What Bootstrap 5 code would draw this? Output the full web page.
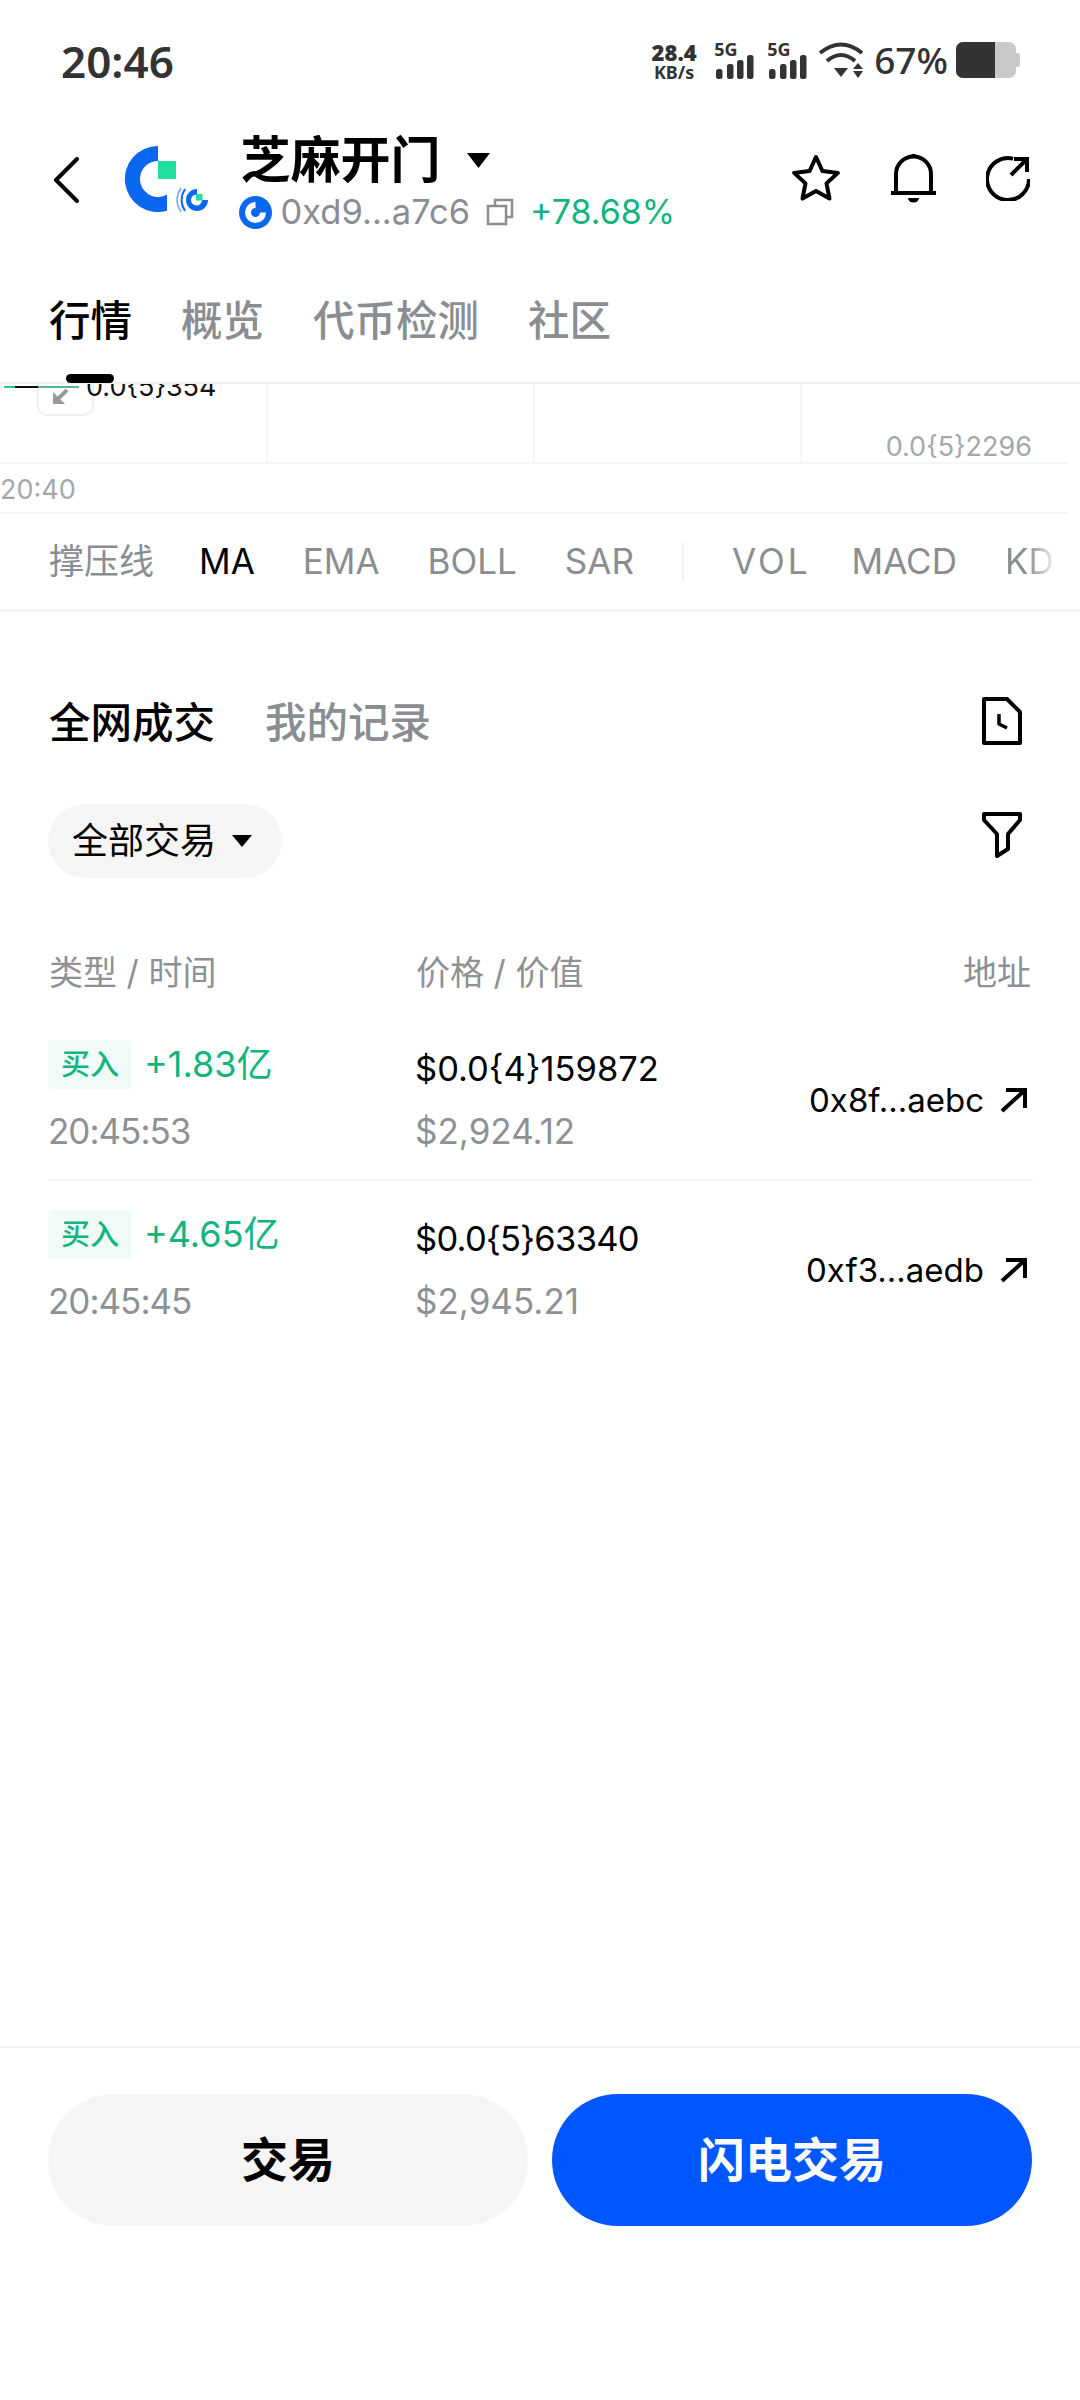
<!DOCTYPE html>
<html lang="zh-CN">
<head>
    <meta charset="UTF-8">
    <meta name="viewport" content="width=device-width, initial-scale=1.0">
    <link href="https://cdn.jsdelivr.net/npm/bootstrap@5.3.3/dist/css/bootstrap.min.css" rel="stylesheet" crossorigin="anonymous">
    <title>芝麻开门</title>
    <style>
        body { width: 1080px; height: 2400px; overflow: hidden; background: #fff; color: #000;
            font-family: Inter, "Noto Sans CJK SC", sans-serif; }
        svg { display: block; flex: none; }

        /* status bar */
        .status-bar { height: 120px; padding: 41px 60px 0 61px; color: #333; font-family: "Noto Sans", "Noto Sans CJK SC", sans-serif; }
        .clock { font-size: 44px; font-weight: 600; line-height: 40px; }
        .speed { width: 50px; margin-right: 15px; text-align: center; font-weight: 700; }
        .speed b { display: block; font-size: 22px; line-height: 22px; }
        .speed i { display: block; font-size: 18px; line-height: 18px; font-style: normal; }
        .signal { width: 40px; margin-right: 13px; }
        .signal b { display: block; font-size: 18px; line-height: 16px; height: 13px; }
        .wifi-box { margin: 0 10px 0 -1px; }
        .percent { font-size: 37px; font-weight: 500; line-height: 38px; margin-right: 8px; }

        /* token header */
        .token-head { height: 120px; padding-left: 53px; }
        .logo-box { margin-left: 44px; }
        .title-box { margin-left: 21.5px; }
        .token-name { font-size: 50px; font-weight: 700; line-height: 64px; }
        .name-caret { margin-left: 26px; }
        .address-line { height: 40px; margin-left: -2px; }
        .address-text { font-size: 34.5px; line-height: 40px; color: #8a8d91; margin-left: 9px; }
        .copy-icon { margin-left: 16px; }
        .gain { font-size: 34px; line-height: 40px; color: #12b57e; margin-left: 16px; }
        .head-actions { margin-left: auto; padding: 0 50px 4px 0; gap: 50px; }

        /* tabs */
        .main-tabs { height: 144px; padding: 51px 0 0 49px; gap: 49px; border-bottom: 2px solid #f0f0f0; font-size: 41.5px; font-weight: 500; line-height: 60px; color: #8a8d91; }
        .main-tabs .now { color: #000; }
        .tab-pill { position: absolute; left: 66px; bottom: -1px; width: 48px; height: 9px; border-radius: 5px; background: #000; }

        /* chart remnant */
        .chart-left { height: 80px; overflow: hidden; border-bottom: 2px solid #f5f5f5; width: 1068px; }
        .chart-cell { width: 267px; border-right: 2px solid #f6f6f6; }
        .chart-cell:first-child { width: 268px; }
        .chart-line { position: absolute; left: 4px; top: 2px; width: 75px; height: 2px; background: linear-gradient(90deg, #1fc995 0 15%, #111 15% 45%, #55b89a 45% 100%); }
        .chart-text { position: absolute; left: 86px; top: -15px; font-size: 27px; line-height: 36px; color: #111; }
        .chart-expand { position: absolute; left: 37px; top: -26px; width: 57px; height: 58px; background: #fff; border: 2px solid #efefef; border-radius: 10px; }
        .chart-expand svg { position: absolute; left: 13px; top: 29px; }
        .chart-low { position: absolute; right: 36px; bottom: -3px; font-size: 27px; line-height: 36px; color: #a5a8ab; }
        .time-axis { height: 50px; width: 1068px; font-size: 27px; line-height: 52px; color: #a5a8ab; border-bottom: 2px solid #f5f5f5; }

        /* indicators */
        .indicators { height: 98px; padding-left: 49px; border-bottom: 3px solid #f3f3f3; font-size: 35px; color: #8a8d91; white-space: nowrap; overflow: hidden; gap: 48px; }
        .indicators span { display: block; }
        .indicators .now { color: #000; margin-left: -3px; }
        .ind-split { width: 2px; height: 38px; background: #f1f1f1; }
        .ind-vol { letter-spacing: 3px; }
        .ind-macd { margin-left: -7px; }
        .ind-fade { background: linear-gradient(90deg, #8a8d91 45%, #eeeeee 100%); -webkit-background-clip: text; background-clip: text; color: transparent; }

        /* trades */
        .trade-tabs { height: 150px; margin-top: 36px; padding: 0 58px 0 49px; font-size: 41.5px; font-weight: 500; color: #8a8d91; }
        .trade-tabs .now { color: #000; margin-right: 50px; }
        .doc-icon { margin: 0 0 5px auto; }
        .filter-row { height: 86px; padding: 0 58px 0 48px; }
        .filter-pill { width: 234px; height: 74px; padding-left: 24px; border-radius: 37px; background: #f5f5f5; font-size: 36px; gap: 16px; }
        .funnel-icon { margin: 0 0 12px auto; }
        .col-head { height: 78px; margin-top: 49px; margin-bottom: 2px; padding: 0 49px; font-size: 34px; color: #8e9194; }
        .col-type { width: 367px; }
        .col-price { flex: 1; }
        .trade-row { height: 166px; margin: 0 47px 0 48px; position: relative; }
        .trade-row + .trade-row { height: 170px; padding-top: 2px; border-top: 2px solid #f2f2f2; }
        .trade-row + .trade-row .trade-addr { top: 67px; }
        .trade-top { height: 49px; margin-top: 27px; }
        .buy-tag { width: 84px; height: 49px; background: #f0fbf7; border-radius: 4px; color: #12b57e; font-size: 29px; font-weight: 500; text-align: center; line-height: 49px; }
        .buy-amount { color: #12b57e; font-size: 36px; line-height: 49px; margin-left: 12px; }
        .price-col { margin-top: 22px; }
        .price-now { font-size: 34.5px; line-height: 49px; margin-top: 9px; }
        .price-tight { letter-spacing: -.7px; }
        .grey-line { color: #8e9194; font-size: 35px; line-height: 44px; margin-top: 20px; }
        .grey-time { letter-spacing: -1px; }
        .grey-value { margin-top: 16px; }
        .trade-type { width: 367px; }
        .trade-addr { position: absolute; right: 6px; top: 65px; gap: 16px; font-size: 33px; line-height: 44px; }

        /* bottom */
        .bottom-bar { position: absolute; left: 0; right: 0; top: 2046px; height: 180px; padding: 46px 48px 0; gap: 24px; border-top: 2px solid #f3f3f3; }
        .btn-trade, .btn-flash { flex: 1; height: 132px; border: 0; border-radius: 66px; font-size: 47px; font-weight: 700; padding: 0; }
        .btn-trade { background: #f5f5f5; color: #000; }
        .btn-flash { background: #0057ff; color: #fff; }
    </style>
</head>
<body class="position-relative">

    <div class="status-bar d-flex">
        <div class="clock">20:46</div>
        <div class="d-flex ms-auto">
            <div class="speed"><b>28.4</b><i>KB/s</i></div>
            <div class="signal">
                <b>5G</b>
                <svg width="40" height="26" viewBox="0 0 40 26" fill="#333"><rect x="2" y="15" width="6.5" height="10" rx="2.5"/><rect x="13" y="10" width="6.5" height="15" rx="2.5"/><rect x="23" y="6" width="6.5" height="19" rx="2.5"/><rect x="33" y="1" width="6.5" height="24" rx="2.5"/></svg>
            </div>
            <div class="signal">
                <b>5G</b>
                <svg width="40" height="26" viewBox="0 0 40 26" fill="#333"><rect x="2" y="15" width="6.5" height="10" rx="2.5"/><rect x="13" y="10" width="6.5" height="15" rx="2.5"/><rect x="23" y="6" width="6.5" height="19" rx="2.5"/><rect x="33" y="1" width="6.5" height="24" rx="2.5"/></svg>
            </div>
            <div class="wifi-box">
                <svg width="45" height="38" viewBox="0 0 45 38" fill="none" stroke="#333" stroke-width="4"><path d="M1 12Q22 -5 43 12"/><path d="M8 20Q22 8 36 20"/><path d="M15 27H29L22 36Z" fill="#333" stroke="none"/><path d="M34 28H44L39 22ZM34 30H44L39 37Z" fill="#333" stroke="none"/></svg>
            </div>
            <div class="percent">67%</div>
            <svg width="64" height="38" viewBox="0 0 64 38"><rect x="0" y="1" width="60" height="36" rx="7" fill="#c9c9c9"/><path d="M7 1H39V37H7A7 7 0 0 1 0 30V8A7 7 0 0 1 7 1Z" fill="#333"/><path d="M60 12H61A3 3 0 0 1 64 15V23A3 3 0 0 1 61 26H60Z" fill="#c9c9c9"/></svg>
        </div>
    </div>

    <div class="token-head d-flex align-items-center">
        <svg width="26" height="46" viewBox="0 0 26 46" fill="none" stroke="#000" stroke-width="4" stroke-linecap="round" stroke-linejoin="round"><path d="M24 2L3 23L24 44"/></svg>
        <div class="logo-box">
            <svg width="96" height="76" viewBox="0 0 96 76">
                <path d="M35 4A33 33 0 1 0 44 68.7V52.6A18 18 0 1 1 35 19Z" fill="#0a68f0"/>
                <rect x="35" y="19" width="18" height="18" fill="#20df9f"/>
                <path d="M74 47A11 11 0 1 0 85 58H79A5.5 5.5 0 1 1 74 52.5Z" fill="#0a68f0"/>
                <rect x="73" y="52" width="6.5" height="6.5" fill="#20df9f"/>
                <path d="M62 47Q55 58 62 69" fill="none" stroke="#0a68f0" stroke-width="2"/>
                <path d="M58 46Q50 58 58 70" fill="none" stroke="#7aa9f5" stroke-width="1.5"/>
            </svg>
        </div>
        <div class="title-box">
            <div class="d-flex align-items-center">
                <div class="token-name">芝麻开门</div>
                <svg class="name-caret" width="23" height="15" viewBox="0 0 23 15" fill="#000"><path d="M0 0H23L11.5 15Z"/></svg>
            </div>
            <div class="address-line d-flex align-items-center">
                <svg width="33" height="33" viewBox="0 0 33 33"><circle cx="16.5" cy="16.5" r="16.5" fill="#0a68f0"/><path d="M16.5 6A10.5 10.5 0 1 0 27 16.5H21A4.5 4.5 0 1 1 16.5 12Z" fill="#fff"/></svg>
                <span class="address-text">0xd9...a7c6</span>
                <svg class="copy-icon" width="28" height="28" viewBox="0 0 28 28" fill="none" stroke="#8a8d91" stroke-width="2.5"><path d="M9 7V2H26V19H20"/><rect x="2" y="8" width="18" height="18"/></svg>
                <span class="gain">+78.68%</span>
            </div>
        </div>
        <div class="head-actions d-flex align-items-center">
            <svg width="50" height="48" viewBox="0 0 50 48" fill="none" stroke="#000" stroke-width="4" stroke-linejoin="round"><path d="M25 3L31.5 17.1L46.9 18.9L35.5 29.4L38.5 44.6L25 37L11.5 44.6L14.5 29.4L3.1 18.9L18.5 17.1Z"/></svg>
            <svg width="45" height="50" viewBox="0 0 45 50" fill="none" stroke="#000" stroke-width="4"><path d="M5 40V21A17.5 17.5 0 0 1 40 21V40"/><path d="M0 40H45"/><path d="M22.5 1V4"/><path d="M17 45H28A5.5 4.5 0 0 1 17 45Z" fill="#000" stroke="none"/></svg>
            <svg width="44" height="46" viewBox="0 0 44 46" fill="none" stroke="#000" stroke-width="4"><path d="M27 3.6A21 21 0 1 0 43 24"/><path d="M28 4H41V17"/><path d="M25 20L41 4"/></svg>
        </div>
    </div>

    <div class="main-tabs d-flex position-relative">
        <div class="now">行情</div>
        <div>概览</div>
        <div>代币检测</div>
        <div>社区</div>
        <div class="tab-pill"></div>
    </div>

    <div class="chart-left d-flex position-relative">
        <div class="chart-cell"></div>
        <div class="chart-cell"></div>
        <div class="chart-cell"></div>
        <div class="chart-expand">
            <svg width="16" height="16" viewBox="0 0 16 16" fill="#999"><path d="M15 1L5 11" stroke="#999" stroke-width="4"/><path d="M1 3V15H13Z"/></svg>
        </div>
        <div class="chart-line"></div>
        <div class="chart-text">0.0{5}354</div>
        <div class="chart-low">0.0{5}2296</div>
    </div>
    <div class="time-axis">20:40</div>

    <div class="indicators d-flex align-items-center">
        <span>撑压线</span>
        <span class="now">MA</span>
        <span>EMA</span>
        <span>BOLL</span>
        <span>SAR</span>
        <span class="ind-split"></span>
        <span class="ind-vol">VOL</span>
        <span class="ind-macd">MACD</span>
        <span class="ind-fade">KD</span>
    </div>

    <div class="trade-tabs d-flex align-items-center">
        <div class="now">全网成交</div>
        <div>我的记录</div>
        <svg class="doc-icon" width="40" height="48" viewBox="0 0 40 48" fill="none" stroke="#000" stroke-width="4" stroke-linejoin="round"><path d="M2 2H25L38 15V46H2Z"/><path d="M17 17V27L25 31" stroke-width="3.5"/></svg>
    </div>

    <div class="filter-row d-flex align-items-center">
        <div class="filter-pill d-flex align-items-center">
            <span>全部交易</span>
            <svg width="20" height="12" viewBox="0 0 20 12" fill="#000"><path d="M0 0H20L10 12Z"/></svg>
        </div>
        <svg class="funnel-icon" width="40" height="46" viewBox="0 0 40 46" fill="none" stroke="#000" stroke-width="4" stroke-linejoin="round"><path d="M2 2H38V8L26 22V37L15 44V22L2 8Z"/></svg>
    </div>

    <div class="col-head d-flex align-items-center">
        <div class="col-type">类型 / 时间</div>
        <div class="col-price">价格 / 价值</div>
        <div>地址</div>
    </div>

    <div class="trade-row d-flex">
        <div class="trade-type">
            <div class="trade-top d-flex"><div class="buy-tag">买入</div><div class="buy-amount">+1.83亿</div></div>
            <div class="grey-line grey-time">20:45:53</div>
        </div>
        <div class="price-col">
            <div class="price-now">$0.0{4}159872</div>
            <div class="grey-line grey-value">$2,924.12</div>
        </div>
        <div class="trade-addr d-flex align-items-center">
            <span>0x8f...aebc</span>
            <svg width="27" height="26" viewBox="0 0 27 26" fill="none" stroke="#000" stroke-width="4"><path d="M2 24L25 3"/><path d="M6 3H25V21"/></svg>
        </div>
    </div>
    <div class="trade-row d-flex">
        <div class="trade-type">
            <div class="trade-top d-flex"><div class="buy-tag">买入</div><div class="buy-amount">+4.65亿</div></div>
            <div class="grey-line grey-time">20:45:45</div>
        </div>
        <div class="price-col">
            <div class="price-now price-tight">$0.0{5}63340</div>
            <div class="grey-line grey-value">$2,945.21</div>
        </div>
        <div class="trade-addr d-flex align-items-center">
            <span>0xf3...aedb</span>
            <svg width="27" height="26" viewBox="0 0 27 26" fill="none" stroke="#000" stroke-width="4"><path d="M2 24L25 3"/><path d="M6 3H25V21"/></svg>
        </div>
    </div>

    <div class="bottom-bar d-flex">
        <button class="btn btn-trade">交易</button>
        <button class="btn btn-flash">闪电交易</button>
    </div>

    <script src="https://cdn.jsdelivr.net/npm/bootstrap@5.3.3/dist/js/bootstrap.bundle.min.js"></script>
</body>
</html>
